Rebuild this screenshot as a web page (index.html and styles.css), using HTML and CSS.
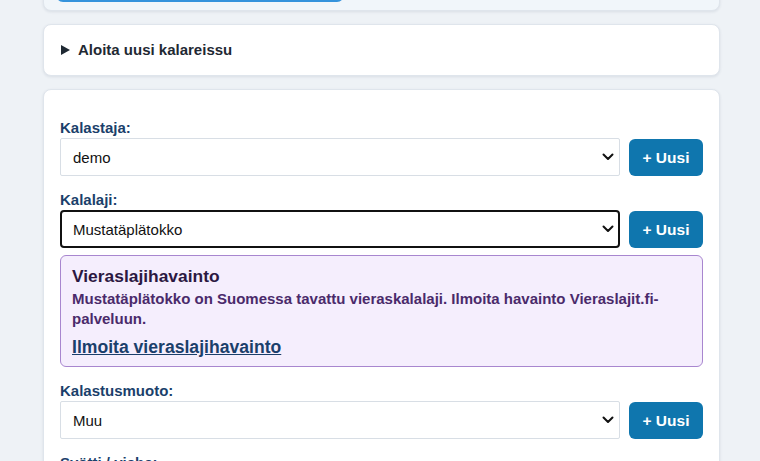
FILE: index.html
```html
<!DOCTYPE html>
<html lang="fi">
<head>
<meta charset="utf-8">
<title>Kalareissu</title>
<link rel="stylesheet" href="styles.css">
</head>
<body>
<main class="page">
  <section class="card card-top">
    <button class="primary-btn" type="button" aria-label="Tallenna"></button>
  </section>

  <section class="card card-summary">
    <details>
      <summary>Aloita uusi kalareissu</summary>
    </details>
  </section>

  <section class="card card-form">
    <div class="field">
      <label class="label" for="kalastaja">Kalastaja:</label>
      <div class="row">
        <div class="select-wrap">
          <select id="kalastaja" class="select"><option>demo</option></select>
          <svg class="chev" viewBox="0 0 12 8" width="12" height="8"><path d="M1.5 1.5 L6 6 L10.5 1.5" fill="none" stroke="#111" stroke-width="2" stroke-linecap="round" stroke-linejoin="round"/></svg>
        </div>
        <button class="new-btn" type="button">+ Uusi</button>
      </div>
    </div>

    <div class="field">
      <label class="label" for="kalalaji">Kalalaji:</label>
      <div class="row">
        <div class="select-wrap">
          <select id="kalalaji" class="select focused"><option>Mustatäplätokko</option></select>
          <svg class="chev" viewBox="0 0 12 8" width="12" height="8"><path d="M1.5 1.5 L6 6 L10.5 1.5" fill="none" stroke="#111" stroke-width="2" stroke-linecap="round" stroke-linejoin="round"/></svg>
        </div>
        <button class="new-btn" type="button">+ Uusi</button>
      </div>
      <div class="alert">
        <div class="alert-title">Vieraslajihavainto</div>
        <p class="alert-text">Mustatäplätokko on Suomessa tavattu vieraskalalaji. Ilmoita havainto Vieraslajit.fi-palveluun.</p>
        <a class="alert-link" href="#">Ilmoita vieraslajihavainto</a>
      </div>
    </div>

    <div class="field">
      <label class="label" for="muoto">Kalastusmuoto:</label>
      <div class="row">
        <div class="select-wrap">
          <select id="muoto" class="select"><option>Muu</option></select>
          <svg class="chev" viewBox="0 0 12 8" width="12" height="8"><path d="M1.5 1.5 L6 6 L10.5 1.5" fill="none" stroke="#111" stroke-width="2" stroke-linecap="round" stroke-linejoin="round"/></svg>
        </div>
        <button class="new-btn" type="button">+ Uusi</button>
      </div>
    </div>

    <div class="field">
      <label class="label" for="syotti">Syötti / viehe:</label>
      <div class="row">
        <div class="select-wrap">
          <select id="syotti" class="select"><option>Muu</option></select>
        </div>
        <button class="new-btn" type="button">+ Uusi</button>
      </div>
    </div>
  </section>
</main>
</body>
</html>
```

FILE: styles.css
```css
html, body {
  margin: 0;
  padding: 0;
}
body {
  background: #eef2f6;
  font-family: "Liberation Sans", Arial, sans-serif;
  color: #1f2933;
  overflow: hidden;
}
.page {
  width: 677px;
  margin: -57px 0 0 43px;
  display: flex;
  flex-direction: column;
  gap: 13px;
}
.card {
  background: #fff;
  border: 1px solid #dfe5ec;
  border-radius: 8px;
  box-shadow: 0 1px 3px rgba(30, 50, 80, 0.10);
  box-sizing: border-box;
}
.card-top {
  background: #f1f6fa;
  padding: 16px 12px 8px 12px;
}
.primary-btn {
  display: block;
  width: 288px;
  height: 42px;
  border: 0;
  border-radius: 7px;
  background: #3593dc;
}
.card-summary {
  padding: 15px 16px 16px 16px;
}
details summary {
  font-size: 15px;
  font-weight: bold;
  line-height: 19px;
  color: #1f2933;
  cursor: pointer;
  list-style: none;
  display: flex;
  align-items: center;
  gap: 8px;
}
details summary::-webkit-details-marker { display: none; }
details summary::before {
  content: "";
  width: 0;
  height: 0;
  border-top: 5px solid transparent;
  border-bottom: 5px solid transparent;
  border-left: 9px solid #1f2933;
  margin-left: 1px;
}
.card-form {
  padding: 29px 16px 40px 16px;
  display: flex;
  flex-direction: column;
  gap: 15px;
}
.field {
  display: flex;
  flex-direction: column;
}
.label {
  font-size: 15px;
  font-weight: bold;
  line-height: 18px;
  color: #1b3f6b;
  margin-bottom: 1px;
}
.row {
  display: flex;
  gap: 9px;
  align-items: stretch;
}
.select-wrap {
  position: relative;
  flex: 1;
}
.select {
  -webkit-appearance: none;
  appearance: none;
  width: 100%;
  height: 38px;
  box-sizing: border-box;
  border: 1px solid #d8dee5;
  border-radius: 2px;
  background: #fff;
  padding: 0 30px 0 12px;
  font: 15px "Liberation Sans", Arial, sans-serif;
  color: #111;
}
.select.focused {
  border: 2px solid #111;
  border-radius: 4px;
  padding-left: 11px;
}
.chev {
  position: absolute;
  right: 6px;
  top: 15px;
  pointer-events: none;
}
.new-btn {
  width: 74px;
  height: 37px;
  border: 0;
  border-radius: 6px;
  background: #0f76ae;
  color: #fff;
  font: bold 15.5px "Liberation Sans", Arial, sans-serif;
  margin-top: 1px;
}
.alert {
  margin-top: 7px;
  background: #f5eefd;
  border: 1px solid #a886cf;
  border-radius: 6px;
  padding: 10px 11px 8px 11px;
}
.alert-title {
  font-size: 17.4px;
  font-weight: bold;
  line-height: 20px;
  color: #2c1842;
}
.alert-text {
  margin: 3px 0 7px 0;
  font-size: 15px;
  font-weight: bold;
  line-height: 20px;
  color: #4a2a6b;
}
.alert-link {
  font-size: 17.6px;
  font-weight: bold;
  line-height: 22px;
  color: #1b3f6b;
  text-decoration: underline;
}
```
